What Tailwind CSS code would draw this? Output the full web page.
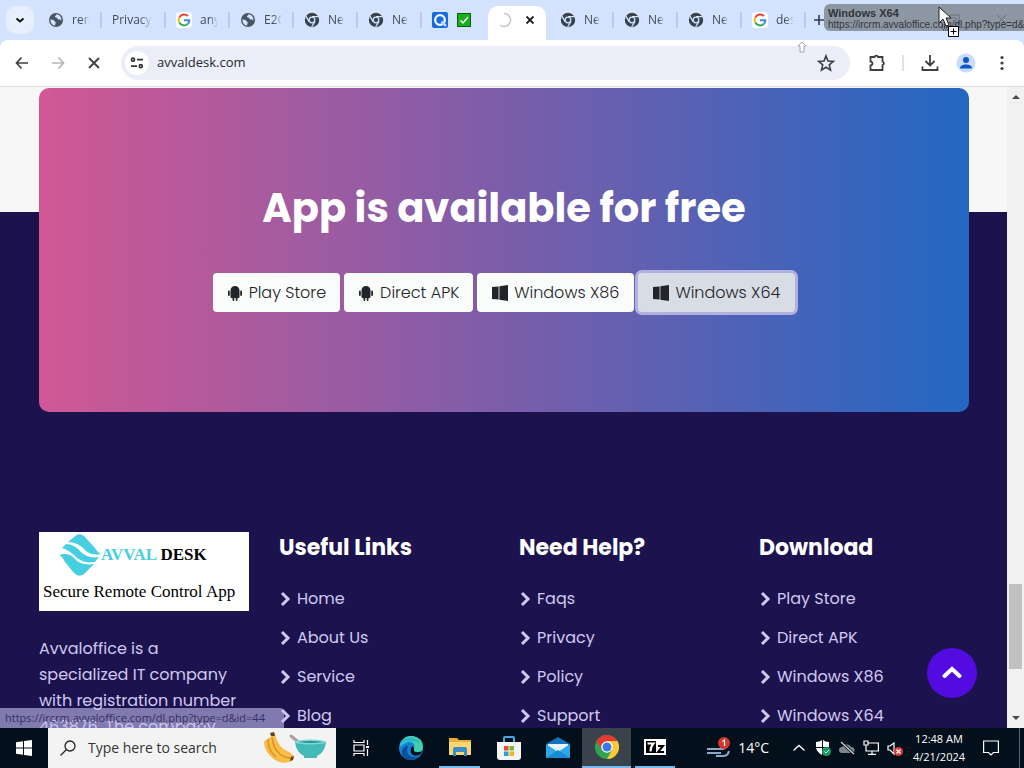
<!DOCTYPE html>
<html lang="en">
<head>
<meta charset="utf-8">
<title>AvvalDesk</title>
<script src="https://cdn.jsdelivr.net/npm/@tailwindcss/browser@4"></script>
</head>
<body class="relative flex h-screen flex-col overflow-hidden bg-white font-['Open_Sans','Noto_Sans',sans-serif]">
<svg class="hidden" aria-hidden="true">
  <symbol id="globe" viewBox="0 0 16 16"><circle cx="8" cy="8" r="7" fill="#4a5563"/><path d="M2.500 7.500c1.500 0 3 .2 3.600 1.200.5 1 1.600.8 1.600 1.800S7 12 7.300 13.600C4.500 13.500 2.200 11 2.500 7.500ZM8.500 2.200c.2 1.300-1.700 1.300-1.500 2.500.2.900 1.900.3 2.200 1.500.3 1.400 1.400 1.300 2.200 1.300s1.400.6 2 1.100C13.800 5.500 12 2.500 8.500 2.200Z" fill="#d3e3fd"/></symbol>
  <symbol id="chrome-gray" viewBox="0 0 16 16"><circle cx="8" cy="8" r="7.200" fill="#39444f"/><circle cx="8" cy="8" r="2.800" fill="none" stroke="#d3e3fd" stroke-width="1.300"/><path d="M8 4.700h6.400M5.100 9.600 2 4.300M10.800 9.600 7.600 15" stroke="#d3e3fd" stroke-width="1.300" fill="none"/></symbol>
  <symbol id="google" viewBox="0 0 16 16"><rect width="16" height="16" rx="4" fill="#fff"/><path d="M12 4.200A5.300 5.300 0 0 0 3.300 5.500" fill="none" stroke="#ea4335" stroke-width="2"/><path d="M3.300 5.500a5.300 5.300 0 0 0 0 5" fill="none" stroke="#fbbc05" stroke-width="2"/><path d="M3.300 10.500a5.300 5.300 0 0 0 8.400 1.400" fill="none" stroke="#34a853" stroke-width="2"/><path d="M8 8.200h5.300a5.300 5.300 0 0 1-1.600 3.700" fill="none" stroke="#4285f4" stroke-width="2"/></symbol>
  <symbol id="android" viewBox="0 0 16 16"><path d="M3.500 5.500C3.500 2.800 5.400 1 8 1s4.500 1.800 4.500 4.500V12a1 1 0 0 1-1 1h-1v2a.9.900 0 0 1-1.800 0v-2H7.300v2a.9.900 0 0 1-1.800 0v-2h-1a1 1 0 0 1-1-1ZM1 6.500a.9.900 0 0 1 1.800 0V10A.9.900 0 0 1 1 10ZM13.200 6.500a.9.900 0 0 1 1.800 0V10a.9.900 0 0 1-1.800 0Z" fill="#212529"/></symbol>
  <symbol id="win-dark" viewBox="0 0 16 16"><path d="M0 2 6.600 1.500v13L0 14ZM7.400 1.200 16 0v16l-8.600-1.200Z" fill="#212529"/></symbol>
  <symbol id="chev" viewBox="0 0 12 16"><path d="m3 2 6 6-6 6" fill="none" stroke="#d0c8ee" stroke-width="3"/></symbol>
</svg>

<header class="flex-none border-b border-[#dcdce0]">
  <nav aria-label="Tabs" class="flex h-10 items-center bg-[#d3e3fd] text-xs text-[#3f4a5a]">
    <button aria-label="Search tabs" class="ml-1.5 mr-1 flex size-7 flex-none items-center justify-center rounded-[10px] bg-[#e6effd]">
      <svg class="size-4" viewBox="0 0 16 16"><path d="m4.500 6.500 3.500 3 3.500-3" fill="none" stroke="#111" stroke-width="2"/></svg>
    </button>
    <a href="#" class="flex h-4 w-16 flex-none items-center gap-2 border-r-2 border-[#b4cbf3] px-2.5"><svg class="size-4 flex-none"><use href="#globe"/></svg><span class="w-[18px] overflow-hidden mask-r-from-50%">ren</span></a>
    <a href="#" class="flex h-4 w-16 flex-none items-center border-r-2 border-[#b4cbf3] px-2.5"><span class="mask-r-from-70%">Privacy</span></a>
    <a href="#" class="flex h-4 w-16 flex-none items-center gap-2 border-r-2 border-[#b4cbf3] px-2.5"><svg class="size-4 flex-none"><use href="#google"/></svg><span class="w-[18px] overflow-hidden mask-r-from-50%">any</span></a>
    <a href="#" class="flex h-4 w-16 flex-none items-center gap-2 border-r-2 border-[#b4cbf3] px-2.5"><svg class="size-4 flex-none"><use href="#globe"/></svg><span class="w-[18px] overflow-hidden mask-r-from-50%">E2C</span></a>
    <a href="#" class="flex h-4 w-16 flex-none items-center gap-2 border-r-2 border-[#b4cbf3] px-2.5"><svg class="size-4 flex-none"><use href="#chrome-gray"/></svg><span class="mask-r-from-70%">Ne</span></a>
    <a href="#" class="flex h-4 w-16 flex-none items-center gap-2 border-r-2 border-[#b4cbf3] px-2.5"><svg class="size-4 flex-none"><use href="#chrome-gray"/></svg><span class="mask-r-from-70%">Ne</span></a>
    <a href="#" aria-label="Done" class="flex h-4 w-16 flex-none items-center gap-2 px-2.5">
      <svg class="size-4 flex-none" viewBox="0 0 16 16"><rect width="16" height="16" rx="2" fill="#1769e0"/><circle cx="8" cy="8" r="4.800" fill="none" stroke="#fff" stroke-width="2.200"/><path d="m9.500 9.500 4.500 4.500" stroke="#bcd7ff" stroke-width="2.500"/></svg>
      <svg class="size-4 flex-none" viewBox="0 0 16 16"><rect x="1.500" y="1.500" width="13" height="13" fill="#17b01a" stroke="#0d5c12"/><path d="m4.500 8.500 2.500 2.500 5-6" fill="none" stroke="#fff" stroke-width="1.500"/></svg>
    </a>
    <div class="mx-0.5 flex h-[34px] w-[58px] flex-none items-center justify-between self-end rounded-t-[10px] bg-white px-2 pb-1.5">
      <svg class="size-4" viewBox="0 0 16 16"><path d="M8 1.500a6.500 6.500 0 1 1-4 11.600" fill="none" stroke="#c6c9d2" stroke-width="1.500"/></svg>
      <button aria-label="Close tab"><svg class="size-4" viewBox="0 0 16 16"><path d="m4.500 4.500 7 7m0-7-7 7" stroke="#222" stroke-width="1.800"/></svg></button>
    </div>
    <a href="#" class="ml-0.5 flex h-4 w-16 flex-none items-center gap-2 border-r-2 border-[#b4cbf3] px-2.5"><svg class="size-4 flex-none"><use href="#chrome-gray"/></svg><span class="mask-r-from-70%">Ne</span></a>
    <a href="#" class="flex h-4 w-16 flex-none items-center gap-2 border-r-2 border-[#b4cbf3] px-2.5"><svg class="size-4 flex-none"><use href="#chrome-gray"/></svg><span class="mask-r-from-70%">Ne</span></a>
    <a href="#" class="flex h-4 w-16 flex-none items-center gap-2 border-r-2 border-[#b4cbf3] px-2.5"><svg class="size-4 flex-none"><use href="#chrome-gray"/></svg><span class="mask-r-from-70%">Ne</span></a>
    <a href="#" class="flex h-4 w-16 flex-none items-center gap-2 border-r-2 border-[#b4cbf3] px-2.5"><svg class="size-4 flex-none"><use href="#google"/></svg><span class="w-[18px] overflow-hidden mask-r-from-50%">des</span></a>
    <button aria-label="New tab" class="ml-1.5 flex-none"><svg class="size-4" viewBox="0 0 16 16"><path d="M7 3v10M2 8h10" stroke="#333c48" stroke-width="1.600"/></svg></button>
  </nav>
  <div class="bg-[#d3e3fd]"><div class="flex h-[46px] items-center rounded-t-lg bg-white">
    <div class="flex flex-none gap-4 pl-3 pr-[17px]">
      <button aria-label="Back"><svg class="size-5" viewBox="0 0 20 20"><path d="M16 10H4.500m5-5.500L4.500 10l5 5.500" fill="none" stroke="#3c3f43" stroke-width="1.700"/></svg></button>
      <button aria-label="Forward"><svg class="size-5" viewBox="0 0 20 20"><path d="M4 10h11.500m-5-5.500 5 5.500-5 5.500" fill="none" stroke="#b4b6ba" stroke-width="1.700"/></svg></button>
      <button aria-label="Stop"><svg class="size-5" viewBox="0 0 20 20"><path d="m5 5 10 10m0-10L5 15" stroke="#3c3f43" stroke-width="1.800"/></svg></button>
    </div>
    <div class="flex h-[34px] flex-1 items-center gap-2 rounded-full bg-[#ebedf8] px-1">
      <button aria-label="Site information" class="flex size-6 flex-none items-center justify-center rounded-full bg-white"><svg class="size-4" viewBox="0 0 16 16" fill="none" stroke="#333" stroke-width="1.700"><circle cx="4" cy="4.700" r="1.500"/><path d="M8 4.700h6M2 11.200h6"/><circle cx="11.800" cy="11.200" r="1.500"/></svg></button>
      <input aria-label="Address" value="avvaldesk.com" class="min-w-0 flex-1 bg-transparent text-[13px] text-[#24272c] outline-none">
      <button aria-label="Bookmark" class="mr-2.5 flex-none"><svg class="size-5" viewBox="0 0 20 20"><path d="m10 3 2 5 5.300.4-4 3.500 1.200 5.200L10 14.300l-4.500 2.800 1.200-5.200-4-3.500L8 8Z" fill="none" stroke="#3c3f43" stroke-width="1.600"/></svg></button>
    </div>
    <div class="flex flex-none items-center pl-4 pr-3">
      <button aria-label="Extensions"><svg class="size-5" viewBox="0 0 20 20"><path d="M4.500 4H8.500a1.800 1.800 0 0 1 3.500 0h4.500v4.500a1.800 1.800 0 0 1 0 3.500v5h-12v-4.500a2 2 0 0 0 0-4Z" fill="none" stroke="#3c3f43" stroke-width="1.800"/></svg></button>
      <span class="mx-4 h-4 w-0.5 bg-[#dbe3f3]"></span>
      <button aria-label="Downloads"><svg class="size-5" viewBox="0 0 20 20"><path d="M10 2v10m-4.500-4L10 12.500 14.500 8M2.500 13.500V17h15v-3.500" fill="none" stroke="#3c3f43" stroke-width="1.800"/></svg></button>
      <button aria-label="Profile" class="ml-4"><svg class="size-5" viewBox="0 0 20 20"><circle cx="10" cy="10" r="9.500" fill="#c9dcfb"/><circle cx="10" cy="7" r="3" fill="#0b57d0"/><path d="M4 15.500c0-3 3-4 6-4s6 1 6 4Z" fill="#0b57d0"/></svg></button>
      <button aria-label="Menu" class="ml-4"><svg class="size-5" viewBox="0 0 20 20" fill="#3c3f43"><circle cx="10" cy="4.500" r="1.600"/><circle cx="10" cy="10" r="1.600"/><circle cx="10" cy="15.500" r="1.600"/></svg></button>
    </div>
  </div></div>
</header>

<div class="relative flex min-h-0 flex-1">
  <main class="min-w-0 flex-1 overflow-hidden bg-linear-[180deg,#f7f7f8_125px,#1c134e_125px] pr-[38px] pl-[39px] pt-px font-[Poppins,Inter,sans-serif] text-base">
    <section class="flex h-[324px] flex-col items-center rounded-[10px] bg-linear-[90deg,#d15895,#b05a9c_20%,#735eac_55%,#2367c3] pt-24">
      <h1 class="text-[40px] leading-12 font-bold text-white">App is available for free</h1>
      <div class="mt-[41px] flex justify-center gap-1 font-light text-[#212529]">
        <button class="flex h-[39px] items-center gap-1.5 rounded-sm bg-[#fafbfb] px-[14px]"><svg class="size-4"><use href="#android"/></svg>Play Store</button>
        <button class="flex h-[39px] items-center gap-1.5 rounded-sm bg-[#fafbfb] px-[14px]"><svg class="size-4"><use href="#android"/></svg>Direct APK</button>
        <button class="flex h-[39px] items-center gap-1.5 rounded-sm bg-[#fafbfb] px-[15px]"><svg class="size-4"><use href="#win-dark"/></svg>Windows X86</button>
        <button class="flex h-[39px] items-center gap-1.5 rounded-sm bg-[#d8dce5] px-[15px] ring-3 ring-[#b1b1e0]"><svg class="size-4"><use href="#win-dark"/></svg>Windows X64</button>
      </div>
    </section>
    <footer class="mt-[120px] grid grid-cols-4 gap-x-[30px] text-[#d0c8ee]">
      <div>
        <div class="h-[79px] bg-white pl-1 text-black">
          <div class="flex h-[46px] items-center pl-4">
            <svg class="h-[42px] w-[42px]" viewBox="0 0 42 42" fill="#46cfe0"><path d="M9 8 17 1.500Q21-1 25 2L36 14Q39 19 42 20 32 22 26 16 19 8 9 8Z"/><path d="M7 10Q15 10 22 18 29 25 40 23L36 28Q24 30 17 23 10 16 3 14Z"/><path d="M0 21Q10 18 16 25 22 32 35 30L25 40Q20 44 15 39L6 28Q3 22 0 21Z"/></svg>
            <p class="font-['Liberation_Serif',serif] text-[17px] font-bold whitespace-nowrap"><span class="text-[#46cfe0]">AVVAL</span> DESK</p>
          </div>
          <p class="font-['Liberation_Serif',serif] text-[17px] leading-7 whitespace-nowrap">Secure Remote Control App</p>
        </div>
        <p class="mt-[25px] leading-[26px]">Avvaloffice is a<br>specialized IT company<br>with registration number<br>463876. The company</p>
      </div>
      <div>
        <h2 class="text-[22px] leading-8 font-bold text-white">Useful Links</h2>
        <ul class="mt-[15px] leading-[39px]">
          <li><a href="#" class="flex items-center gap-1.5"><svg class="h-4 w-3"><use href="#chev"/></svg>Home</a></li>
          <li><a href="#" class="flex items-center gap-1.5"><svg class="h-4 w-3"><use href="#chev"/></svg>About Us</a></li>
          <li><a href="#" class="flex items-center gap-1.5"><svg class="h-4 w-3"><use href="#chev"/></svg>Service</a></li>
          <li><a href="#" class="flex items-center gap-1.5"><svg class="h-4 w-3"><use href="#chev"/></svg>Blog</a></li>
        </ul>
      </div>
      <div>
        <h2 class="text-[22px] leading-8 font-bold text-white">Need Help?</h2>
        <ul class="mt-[15px] leading-[39px]">
          <li><a href="#" class="flex items-center gap-1.5"><svg class="h-4 w-3"><use href="#chev"/></svg>Faqs</a></li>
          <li><a href="#" class="flex items-center gap-1.5"><svg class="h-4 w-3"><use href="#chev"/></svg>Privacy</a></li>
          <li><a href="#" class="flex items-center gap-1.5"><svg class="h-4 w-3"><use href="#chev"/></svg>Policy</a></li>
          <li><a href="#" class="flex items-center gap-1.5"><svg class="h-4 w-3"><use href="#chev"/></svg>Support</a></li>
        </ul>
      </div>
      <div>
        <h2 class="text-[22px] leading-8 font-bold text-white">Download</h2>
        <ul class="mt-[15px] leading-[39px]">
          <li><a href="#" class="flex items-center gap-1.5"><svg class="h-4 w-3"><use href="#chev"/></svg>Play Store</a></li>
          <li><a href="#" class="flex items-center gap-1.5"><svg class="h-4 w-3"><use href="#chev"/></svg>Direct APK</a></li>
          <li><a href="#" class="flex items-center gap-1.5"><svg class="h-4 w-3"><use href="#chev"/></svg>Windows X86</a></li>
          <li><a href="#" class="flex items-center gap-1.5"><svg class="h-4 w-3"><use href="#chev"/></svg>Windows X64</a></li>
        </ul>
      </div>
    </footer>
  </main>
  <div class="flex w-[17px] flex-none flex-col items-center justify-between bg-[#f1f1f1] py-1" aria-hidden="true">
    <svg class="h-3 w-4" viewBox="0 0 16 12"><path d="m4 8 4-4 4 4Z" fill="#4a4a4a"/></svg>
    <span class="mt-[437px] h-[85px] w-[13px] bg-[#c1c1c1]"></span>
    <svg class="h-3 w-4" viewBox="0 0 16 12"><path d="m4 4 4 4 4-4Z" fill="#4a4a4a"/></svg>
  </div>
  <button aria-label="Back to top" class="absolute right-[47px] bottom-[30px] flex size-[50px] items-center justify-center rounded-full bg-[#530be0]"><svg class="size-5" viewBox="0 0 20 20"><path d="m2.500 13 7.500-7 7.500 7" fill="none" stroke="#fff" stroke-width="4" stroke-linecap="round"/></svg></button>
  <p class="absolute bottom-0 left-0 h-5 w-[284px] rounded-tr-sm bg-[#c4c0ee]/60 pl-[5px] text-[11px] leading-5 whitespace-nowrap text-[#35305c]">https://ircrm.avvaloffice.com/dl.php?type=d&amp;id=44</p>
</div>

<footer class="flex h-10 flex-none items-stretch bg-[#03101b] text-white">
  <button aria-label="Start" class="flex w-12 flex-none items-center justify-center"><svg class="size-4" viewBox="0 0 16 16" fill="#fff"><path d="M0 2.200 7 1.200v6.300H0ZM8 1l8-1v7.500H8ZM0 8.500h7v6.300l-7-1ZM8 8.500h8V16l-8-1Z"/></svg></button>
  <label class="flex w-72 flex-none items-center bg-[#f3f3f3] pl-3 pr-2">
    <svg class="size-4 flex-none" viewBox="0 0 16 16" fill="none" stroke="#222" stroke-width="1.300"><circle cx="10" cy="6" r="5"/><path d="m6.500 9.500-6 6"/></svg>
    <input aria-label="Search" placeholder="Type here to search" class="ml-3 w-0 min-w-0 flex-1 bg-transparent text-sm outline-none placeholder:text-[#333]">
    <svg class="h-8 w-[66px] flex-none" viewBox="0 0 66 32"><path d="M9 2l4-1 1 5q3 9 11 13 6 3 7 6l-2 4q-9 4-17-1Q2 20 2 10q0-1 7-5Z" fill="#f7bd45"/><path d="M10 5q1 12 9 18 5 3 10 3M6 7q0 12 8 18" fill="none" stroke="#d98b25" stroke-width="1.300"/><path d="m9 4-1-3 4-1 1 4ZM29 25l3-1-1 4-3 1Z" fill="#65421f"/><path d="m29 4 11 9" stroke="#aaa0a0" stroke-width="3" stroke-linecap="round"/><path d="M33 10q16-4 31 0-1 10-9 14v2H42v-2q-8-4-9-14Z" fill="#43b9b8"/><ellipse cx="48.500" cy="10" rx="15.500" ry="2.500" fill="#7bdad4"/><path d="M36 10q12-2 25 0-12 2-25 0Z" fill="#2a8f93"/></svg>
  </label>
  <nav aria-label="Taskbar" class="flex flex-none">
    <button aria-label="Task view" class="flex w-[50px] items-center justify-center"><svg class="size-4" viewBox="0 0 16 16" fill="none" stroke="#fff" stroke-width="1.200"><path d="M1 0v2.500h10V0M1 16v-2.500h10V16M1 5h10v6H1ZM14.500 0v5M14.500 9v7"/><path d="M13 7h3" stroke-width="2"/></svg></button>
    <button aria-label="Edge" class="flex w-[49px] items-center justify-center"><svg class="size-6" viewBox="0 0 24 24"><circle cx="12" cy="12" r="12" fill="#1680d0"/><path d="M1 8Q5-1 14 0q10 2 10 11 0 5-5 5-6 0-4-3 2-7-5-7-6 0-9 5Z" fill="#42cfae"/><path d="M1 8Q5 1 12 2q7 1 9 5-9-5-20 4Z" fill="#2ab7d8"/><path d="M9 10q-3 9 5 11 5 1 8-3-6 7-13 6-7-3-6-9 1-5 6-5Z" fill="#0b4f9f"/><path d="M15 13q-1 4 5 3 2 0 3-1-1 3-3 4-6 2-8-2-1-3 1-7 2 1 2 3Z" fill="#03101b"/></svg></button>
    <button aria-label="File Explorer" class="mx-1 flex w-[41px] items-center justify-center border-b-2 border-[#76b9ed]"><svg class="h-5 w-[22px]" viewBox="0 0 22 20"><path d="M0 1h8l2 2h12v15H0Z" fill="#e9ae37"/><path d="M0 5h22v13H0Z" fill="#fbd774"/><path d="M4 19v-7q0-2 2-2h10q2 0 2 2v7h-3v-4H7v4Z" fill="#3e8bc9"/></svg></button>
    <button aria-label="Microsoft Store" class="flex w-[49px] items-center justify-center"><svg class="size-6" viewBox="0 0 24 24"><path d="M7 7V2q0-1 1-1h8q1 0 1 1v5" fill="none" stroke="#48a9e5" stroke-width="2"/><path d="M0 6h24v15q0 3-3 3H3q-3 0-3-3Z" fill="#f4f5f7"/><path d="M7 10h4.500v4.500H7Z" fill="#e94f2d"/><path d="M12.500 10H17v4.500h-4.500Z" fill="#7db72f"/><path d="M7 15.500h4.500V20H7Z" fill="#2c9de0"/><path d="M12.500 15.500H17V20h-4.500Z" fill="#f7b719"/></svg></button>
    <button aria-label="Mail" class="flex w-[49px] items-center justify-center"><svg class="size-6" viewBox="0 0 24 24"><path d="M0 8 12 1l12 7v14H0Z" fill="#1475bd"/><path d="M2 8h20v8H2Z" fill="#e8f4fc"/><path d="M0 8l12 8 12-8v14H0Z" fill="#2fa8eb"/><path d="m0 22 12-8 12 8Z" fill="#168bd4"/></svg></button>
    <button aria-label="Chrome" class="flex w-[49px] items-center justify-center border-b-2 border-[#76b9ed] bg-[#3a434b]"><svg class="size-6" viewBox="0 0 24 24"><circle cx="12" cy="12" r="12" fill="#32a350"/><path d="M1.600 6A12 12 0 0 1 22.400 6H12L7 15Z" fill="#e33b2e"/><path d="M22.400 6A12 12 0 0 1 12 24l5-9-5-9Z" fill="#fcc934"/><circle cx="12" cy="12" r="5.800" fill="#fff"/><circle cx="12" cy="12" r="4.500" fill="#3b78e7"/></svg></button>
    <button aria-label="7-Zip" class="mx-1 flex w-10 items-center justify-center border-b-2 border-[#76b9ed]"><svg class="h-4 w-[22px]" viewBox="0 0 22 16"><path d="M0 0h22v16H0Z" fill="#fff"/><path d="M2 2h10v12H2Z" fill="#000"/><path d="M3.500 4.500h6q-3 3-3 8" fill="none" stroke="#fff" stroke-width="2"/><path d="M14 7h5l-5 6h6" fill="none" stroke="#000" stroke-width="2"/></svg></button>
  </nav>
  <div class="ml-auto flex flex-none items-center">
    <a href="#" class="flex items-center gap-1.5 text-sm"><svg class="h-6 w-[26px]" viewBox="0 0 26 24"><path d="M1 13h15q4 0 4-4M1 17h14M10 20h7q5 0 6-5" fill="none" stroke="#8aa8c7" stroke-width="2"/><circle cx="18" cy="7" r="6" fill="#d3382f"/><path d="m16.500 5.500 2-1.500v6" fill="none" stroke="#fff" stroke-width="1.200"/></svg>14°C</a>
    <button aria-label="Show hidden icons" class="ml-[22px]"><svg class="size-4" viewBox="0 0 16 16"><path d="m2.500 10.500 5.500-5 5.500 5" fill="none" stroke="#fff" stroke-width="1.300"/></svg></button>
    <button aria-label="Security" class="ml-2"><svg class="size-4" viewBox="0 0 16 16"><path d="M7 0v7H1V2q4 0 6-2ZM8 0q2 2 6 2v5H8ZM1 8h6v7Q2 12 1 8ZM8 8h6q-1 5-6 7Z" fill="#fff"/><circle cx="11.500" cy="11.500" r="4.500" fill="#1c9b61"/><path d="m9.500 11.500 1.500 1.500 3-3" fill="none" stroke="#fff"/></svg></button>
    <button aria-label="OneDrive" class="ml-2"><svg class="size-4" viewBox="0 0 16 16"><path d="M3 13a3 3 0 0 1 0-6 5 5 0 0 1 9 0 3 3 0 0 1 1 6Z" fill="#7d858c"/><path d="m2 2 13 12" stroke="#03101b" stroke-width="3"/><path d="m2 2 13 12" stroke="#d7dadd" stroke-width="1.200"/></svg></button>
    <button aria-label="Network" class="ml-2"><svg class="size-4" viewBox="0 0 16 16" fill="none" stroke="#fff" stroke-width="1.200"><path d="M5 3h10.400v8H3V8M9 11v3M5 14.400h8M1 1h4v4H1ZM3 5v3"/></svg></button>
    <button aria-label="Volume muted" class="ml-2"><svg class="size-4" viewBox="0 0 16 16"><path d="M1 6h2l4-3v11l-4-4H1Z" fill="none" stroke="#fff" stroke-width="1.200"/><circle cx="11.500" cy="11.500" r="4.500" fill="#dd3835"/><path d="m9.500 9.500 4 4m0-4-4 4" stroke="#fff" stroke-width="1.200"/></svg></button>
    <time datetime="2024-04-21T00:48" class="ml-1.5 w-[60px] text-center text-[11px] leading-[18px] whitespace-nowrap">12:48 AM<br>4/21/2024</time>
    <button aria-label="Notifications" class="ml-3.5"><svg class="size-4" viewBox="0 0 16 16"><path d="M.6 1h14.800v11.500h-5L8 15l-2.500-2.500H.6Z" fill="none" stroke="#fff" stroke-width="1.200"/></svg></button>
    <span class="ml-5 mr-1 h-10 w-px bg-[#55636d]"></span>
  </div>
</footer>

<!-- Link being dragged over the window controls -->
<svg class="absolute top-3 left-[946px] h-4 w-[72px]" viewBox="0 0 72 16" fill="none" stroke="#46505c" aria-hidden="true"><path d="M1 6h9v9H1ZM4 6V3h9v9h-3M51 3l9 9m0-9-9 9"/></svg>
<div class="absolute top-1 right-0 left-[824px] h-[27px] overflow-hidden rounded-l-md bg-[#767d84]/75 pl-1 font-['Liberation_Sans',sans-serif] whitespace-nowrap text-[#30353b]">
  <p class="text-[11px] leading-[18px] font-bold">Windows X64</p>
  <p class="-mt-0.5 text-[10px] leading-[10px]">https://ircrm.avvaloffice.com/dl.php?type=d&amp;id=44</p>
</div>
<svg class="absolute top-1.5 left-[938px] h-8 w-6" viewBox="0 0 24 32" aria-hidden="true"><path d="M1 1v16l4-4 3 7 3-1-3-7h5Z" fill="#fff" stroke="#222"/><path d="M4 20h10M4 22h8M5 24h6" stroke="#222" stroke-dasharray="1 1"/><path d="M10.500 20.500h10v10h-10Z" fill="#fff" stroke="#000"/><path d="M15.500 22.500v6m-3-3h6" stroke="#000"/></svg>
<svg class="absolute top-[41px] left-[797px] h-3 w-2.5" viewBox="0 0 10 12" aria-hidden="true"><path d="M5 1 1 5h2v6h4V5h2Z" fill="#fff" stroke="#a4a4ab"/></svg>
</body>
</html>
